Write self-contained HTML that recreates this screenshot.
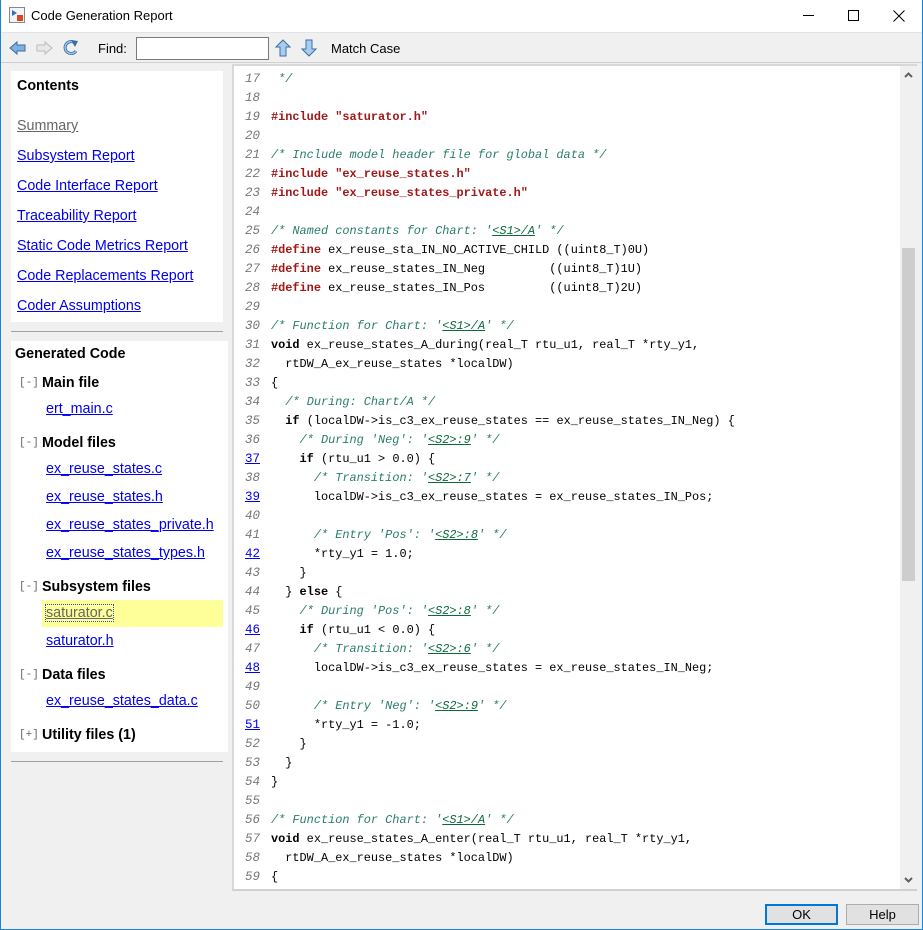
<!DOCTYPE html>
<html><head><meta charset="utf-8"><style>
*{margin:0;padding:0;box-sizing:border-box}
body{width:923px;height:930px;overflow:hidden;background:#f0f0f0;font-family:"Liberation Sans",sans-serif;position:relative}
.abs{position:absolute}
#frame{position:absolute;left:0;top:0;width:923px;height:930px;border:1px solid #1883d7;border-top:none;pointer-events:none;z-index:10}
#title{left:0;top:0;width:923px;height:32px;background:#fff}
#toolbar{left:0;top:32px;width:923px;height:31px;background:#f0f0f0;border-top:1px solid #e3e3e3;border-bottom:1px solid #d0d0d0}
.lt{font-size:14.3px;color:#0000ee;text-decoration:underline;position:absolute;white-space:nowrap}
.hd{font-size:14.3px;font-weight:bold;color:#000;position:absolute;white-space:nowrap}
.br{font-family:"Liberation Mono",monospace;font-size:11px;color:#666;position:absolute}
#code{left:232px;top:64px;width:685px;height:827px;background:#fff;border-left:2px solid #d8d8d8;border-top:2px solid #d8d8d8;border-bottom:2px solid #d0d0d0;overflow:hidden}
.ln{position:absolute;left:0;width:258px;height:19px;font-family:"Liberation Mono",monospace;font-size:11.9px;line-height:19px;white-space:pre}
.n{position:absolute;left:0;width:26px;text-align:right;color:#777;font-style:italic;font-size:12.5px}
.n.a{color:#0000ee;text-decoration:underline;font-style:normal}
.c{position:absolute;left:37px;color:#000}
.cm{color:#2a7d6a;font-style:italic}
.cm u{color:#0b6a3c}
.pp{color:#a01818;font-weight:bold}
.st{color:#a01818;font-weight:bold}
.kw{font-weight:bold}
.btn{position:absolute;top:904px;height:21px;width:73px;background:#e1e1e1;border:1px solid #adadad;font-size:13px;text-align:center;line-height:19px;color:#000}
</style></head><body>
<div id="frame"></div>
<div class="abs" id="title">
 <svg class="abs" style="left:9px;top:7px" width="16" height="16"><rect x="0.5" y="0.5" width="15" height="15" fill="#f4f4f4" stroke="#888"/><path d="M3 3 L8 6 L3 9Z" fill="#2a6fc9"/><rect x="8" y="8" width="6" height="6" fill="#d9481c"/></svg>
 <div class="abs" style="left:31px;top:8px;font-size:13px;color:#000">Code Generation Report</div>
 <div class="abs" style="left:803px;top:15px;width:11px;height:1px;background:#000"></div>
 <div class="abs" style="left:848px;top:10px;width:11px;height:11px;border:1px solid #000"></div>
 <svg class="abs" style="left:893px;top:10px" width="12" height="12"><path d="M0.5 0.5L11.5 11.5M11.5 0.5L0.5 11.5" stroke="#000" stroke-width="1"/></svg>
</div>
<div class="abs" id="toolbar">
 <svg class="abs" style="left:9px;top:7px" width="18" height="16"><path d="M1 8L8 2V5H16V11H8V14Z" fill="#7fb0e0" stroke="#3a6ea5"/></svg>
 <svg class="abs" style="left:35px;top:7px" width="18" height="16"><path d="M17 8L10 2V5H2V11H10V14Z" fill="#e8e8e8" stroke="#bbb"/></svg>
 <svg class="abs" style="left:62px;top:6px" width="18" height="18"><path d="M13 4A6 6 0 1 0 14 12" fill="none" stroke="#3a6ea5" stroke-width="3"/><path d="M13 4A6 6 0 1 0 14 12" fill="none" stroke="#9cc6ee" stroke-width="1.4"/><path d="M9 1L16 2L13 8Z" fill="#3a6ea5"/></svg>
 <div class="abs" style="left:98px;top:8px;font-size:13px">Find:</div>
 <div class="abs" style="left:136px;top:4px;width:133px;height:23px;background:#fff;border:1px solid #7a7a7a"></div>
 <svg class="abs" style="left:275px;top:6px" width="16" height="18"><path d="M8 1L15 8H11V17H5V8H1Z" fill="#a9cdee" stroke="#3a6ea5"/></svg>
 <svg class="abs" style="left:301px;top:6px" width="16" height="18"><path d="M8 17L15 10H11V1H5V10H1Z" fill="#a9cdee" stroke="#3a6ea5"/></svg>
 <div class="abs" style="left:331px;top:8px;font-size:13px">Match Case</div>
</div>
<!-- left panel -->
<div class="abs" style="left:11px;top:71px;width:212px;height:251px;background:#fff"></div>
<div class="hd" style="left:17px;top:78px">Contents</div>
<div class="lt" style="left:17px;top:118px;color:#666">Summary</div>
<div class="lt" style="left:17px;top:148px">Subsystem Report</div>
<div class="lt" style="left:17px;top:178px">Code Interface Report</div>
<div class="lt" style="left:17px;top:208px">Traceability Report</div>
<div class="lt" style="left:17px;top:238px">Static Code Metrics Report</div>
<div class="lt" style="left:17px;top:268px">Code Replacements Report</div>
<div class="lt" style="left:17px;top:298px">Coder Assumptions</div>
<div class="abs" style="left:11px;top:331px;width:212px;height:1px;background:#a0a0a0"></div>
<div class="abs" style="left:11px;top:341px;width:217px;height:411px;background:#fff"></div>
<div class="hd" style="left:15px;top:346px">Generated Code</div>
<div class="br" style="left:19px;top:377px">[-]</div><div class="hd" style="left:42px;top:375px">Main file</div>
<div class="lt" style="left:46px;top:401px">ert_main.c</div>
<div class="br" style="left:19px;top:437px">[-]</div><div class="hd" style="left:42px;top:435px">Model files</div>
<div class="lt" style="left:46px;top:461px">ex_reuse_states.c</div>
<div class="lt" style="left:46px;top:489px">ex_reuse_states.h</div>
<div class="lt" style="left:46px;top:517px">ex_reuse_states_private.h</div>
<div class="lt" style="left:46px;top:545px">ex_reuse_states_types.h</div>
<div class="br" style="left:19px;top:581px">[-]</div><div class="hd" style="left:42px;top:579px">Subsystem files</div>
<div class="abs" style="left:42px;top:600px;width:181px;height:27px;background:#ffff99"></div>
<div class="lt" style="left:46px;top:605px;color:#666;outline:1px dotted #2255aa">saturator.c</div>
<div class="lt" style="left:46px;top:633px">saturator.h</div>
<div class="br" style="left:19px;top:669px">[-]</div><div class="hd" style="left:42px;top:667px">Data files</div>
<div class="lt" style="left:46px;top:693px">ex_reuse_states_data.c</div>
<div class="br" style="left:19px;top:729px">[+]</div><div class="hd" style="left:42px;top:727px">Utility files (1)</div>
<div class="abs" style="left:11px;top:761px;width:212px;height:1px;background:#a0a0a0"></div>
<!-- code -->
<div class="abs" id="code">
<div id="lines" style="position:absolute;left:0;top:4px;width:660px">
<div class="ln" style="top:0"><span class="n">17</span><span class="c"> <span class="cm">*/</span></span></div>
<div class="ln" style="top:19px"><span class="n">18</span></div>
<div class="ln" style="top:38px"><span class="n">19</span><span class="c"><span class="pp">#include</span> <span class="st">"saturator.h"</span></span></div>
<div class="ln" style="top:57px"><span class="n">20</span></div>
<div class="ln" style="top:76px"><span class="n">21</span><span class="c"><span class="cm">/* Include model header file for global data */</span></span></div>
<div class="ln" style="top:95px"><span class="n">22</span><span class="c"><span class="pp">#include</span> <span class="st">"ex_reuse_states.h"</span></span></div>
<div class="ln" style="top:114px"><span class="n">23</span><span class="c"><span class="pp">#include</span> <span class="st">"ex_reuse_states_private.h"</span></span></div>
<div class="ln" style="top:133px"><span class="n">24</span></div>
<div class="ln" style="top:152px"><span class="n">25</span><span class="c"><span class="cm">/* Named constants for Chart: '<u>&lt;S1&gt;/A</u>' */</span></span></div>
<div class="ln" style="top:171px"><span class="n">26</span><span class="c"><span class="pp">#define</span> ex_reuse_sta_IN_NO_ACTIVE_CHILD ((uint8_T)0U)</span></div>
<div class="ln" style="top:190px"><span class="n">27</span><span class="c"><span class="pp">#define</span> ex_reuse_states_IN_Neg         ((uint8_T)1U)</span></div>
<div class="ln" style="top:209px"><span class="n">28</span><span class="c"><span class="pp">#define</span> ex_reuse_states_IN_Pos         ((uint8_T)2U)</span></div>
<div class="ln" style="top:228px"><span class="n">29</span></div>
<div class="ln" style="top:247px"><span class="n">30</span><span class="c"><span class="cm">/* Function for Chart: '<u>&lt;S1&gt;/A</u>' */</span></span></div>
<div class="ln" style="top:266px"><span class="n">31</span><span class="c"><span class="kw">void</span> ex_reuse_states_A_during(real_T rtu_u1, real_T *rty_y1,</span></div>
<div class="ln" style="top:285px"><span class="n">32</span><span class="c">  rtDW_A_ex_reuse_states *localDW)</span></div>
<div class="ln" style="top:304px"><span class="n">33</span><span class="c">{</span></div>
<div class="ln" style="top:323px"><span class="n">34</span><span class="c">  <span class="cm">/* During: Chart/A */</span></span></div>
<div class="ln" style="top:342px"><span class="n">35</span><span class="c">  <span class="kw">if</span> (localDW-&gt;is_c3_ex_reuse_states == ex_reuse_states_IN_Neg) {</span></div>
<div class="ln" style="top:361px"><span class="n">36</span><span class="c">    <span class="cm">/* During 'Neg': '<u>&lt;S2&gt;:9</u>' */</span></span></div>
<div class="ln" style="top:380px"><span class="n a">37</span><span class="c">    <span class="kw">if</span> (rtu_u1 &gt; 0.0) {</span></div>
<div class="ln" style="top:399px"><span class="n">38</span><span class="c">      <span class="cm">/* Transition: '<u>&lt;S2&gt;:7</u>' */</span></span></div>
<div class="ln" style="top:418px"><span class="n a">39</span><span class="c">      localDW-&gt;is_c3_ex_reuse_states = ex_reuse_states_IN_Pos;</span></div>
<div class="ln" style="top:437px"><span class="n">40</span></div>
<div class="ln" style="top:456px"><span class="n">41</span><span class="c">      <span class="cm">/* Entry 'Pos': '<u>&lt;S2&gt;:8</u>' */</span></span></div>
<div class="ln" style="top:475px"><span class="n a">42</span><span class="c">      *rty_y1 = 1.0;</span></div>
<div class="ln" style="top:494px"><span class="n">43</span><span class="c">    }</span></div>
<div class="ln" style="top:513px"><span class="n">44</span><span class="c">  } <span class="kw">else</span> {</span></div>
<div class="ln" style="top:532px"><span class="n">45</span><span class="c">    <span class="cm">/* During 'Pos': '<u>&lt;S2&gt;:8</u>' */</span></span></div>
<div class="ln" style="top:551px"><span class="n a">46</span><span class="c">    <span class="kw">if</span> (rtu_u1 &lt; 0.0) {</span></div>
<div class="ln" style="top:570px"><span class="n">47</span><span class="c">      <span class="cm">/* Transition: '<u>&lt;S2&gt;:6</u>' */</span></span></div>
<div class="ln" style="top:589px"><span class="n a">48</span><span class="c">      localDW-&gt;is_c3_ex_reuse_states = ex_reuse_states_IN_Neg;</span></div>
<div class="ln" style="top:608px"><span class="n">49</span></div>
<div class="ln" style="top:627px"><span class="n">50</span><span class="c">      <span class="cm">/* Entry 'Neg': '<u>&lt;S2&gt;:9</u>' */</span></span></div>
<div class="ln" style="top:646px"><span class="n a">51</span><span class="c">      *rty_y1 = -1.0;</span></div>
<div class="ln" style="top:665px"><span class="n">52</span><span class="c">    }</span></div>
<div class="ln" style="top:684px"><span class="n">53</span><span class="c">  }</span></div>
<div class="ln" style="top:703px"><span class="n">54</span><span class="c">}</span></div>
<div class="ln" style="top:722px"><span class="n">55</span></div>
<div class="ln" style="top:741px"><span class="n">56</span><span class="c"><span class="cm">/* Function for Chart: '<u>&lt;S1&gt;/A</u>' */</span></span></div>
<div class="ln" style="top:760px"><span class="n">57</span><span class="c"><span class="kw">void</span> ex_reuse_states_A_enter(real_T rtu_u1, real_T *rty_y1,</span></div>
<div class="ln" style="top:779px"><span class="n">58</span><span class="c">  rtDW_A_ex_reuse_states *localDW)</span></div>
<div class="ln" style="top:798px"><span class="n">59</span><span class="c">{</span></div>
</div>
<div class="abs" style="left:666px;top:0;width:17px;height:823px;background:#f0f0f0"></div>
<div class="abs" style="left:668px;top:182px;width:13px;height:333px;background:#cdcdcd"></div>
<svg class="abs" style="left:670px;top:6px" width="9" height="6"><path d="M1 5L4.5 1.5L8 5" fill="none" stroke="#606060" stroke-width="2"/></svg>
<svg class="abs" style="left:670px;top:811px" width="9" height="6"><path d="M1 1L4.5 4.5L8 1" fill="none" stroke="#606060" stroke-width="2"/></svg>
</div>
<div class="btn" style="left:765px;border:2px solid #0078d7;line-height:17px">OK</div>
<div class="btn" style="left:846px">Help</div>
</body></html>
